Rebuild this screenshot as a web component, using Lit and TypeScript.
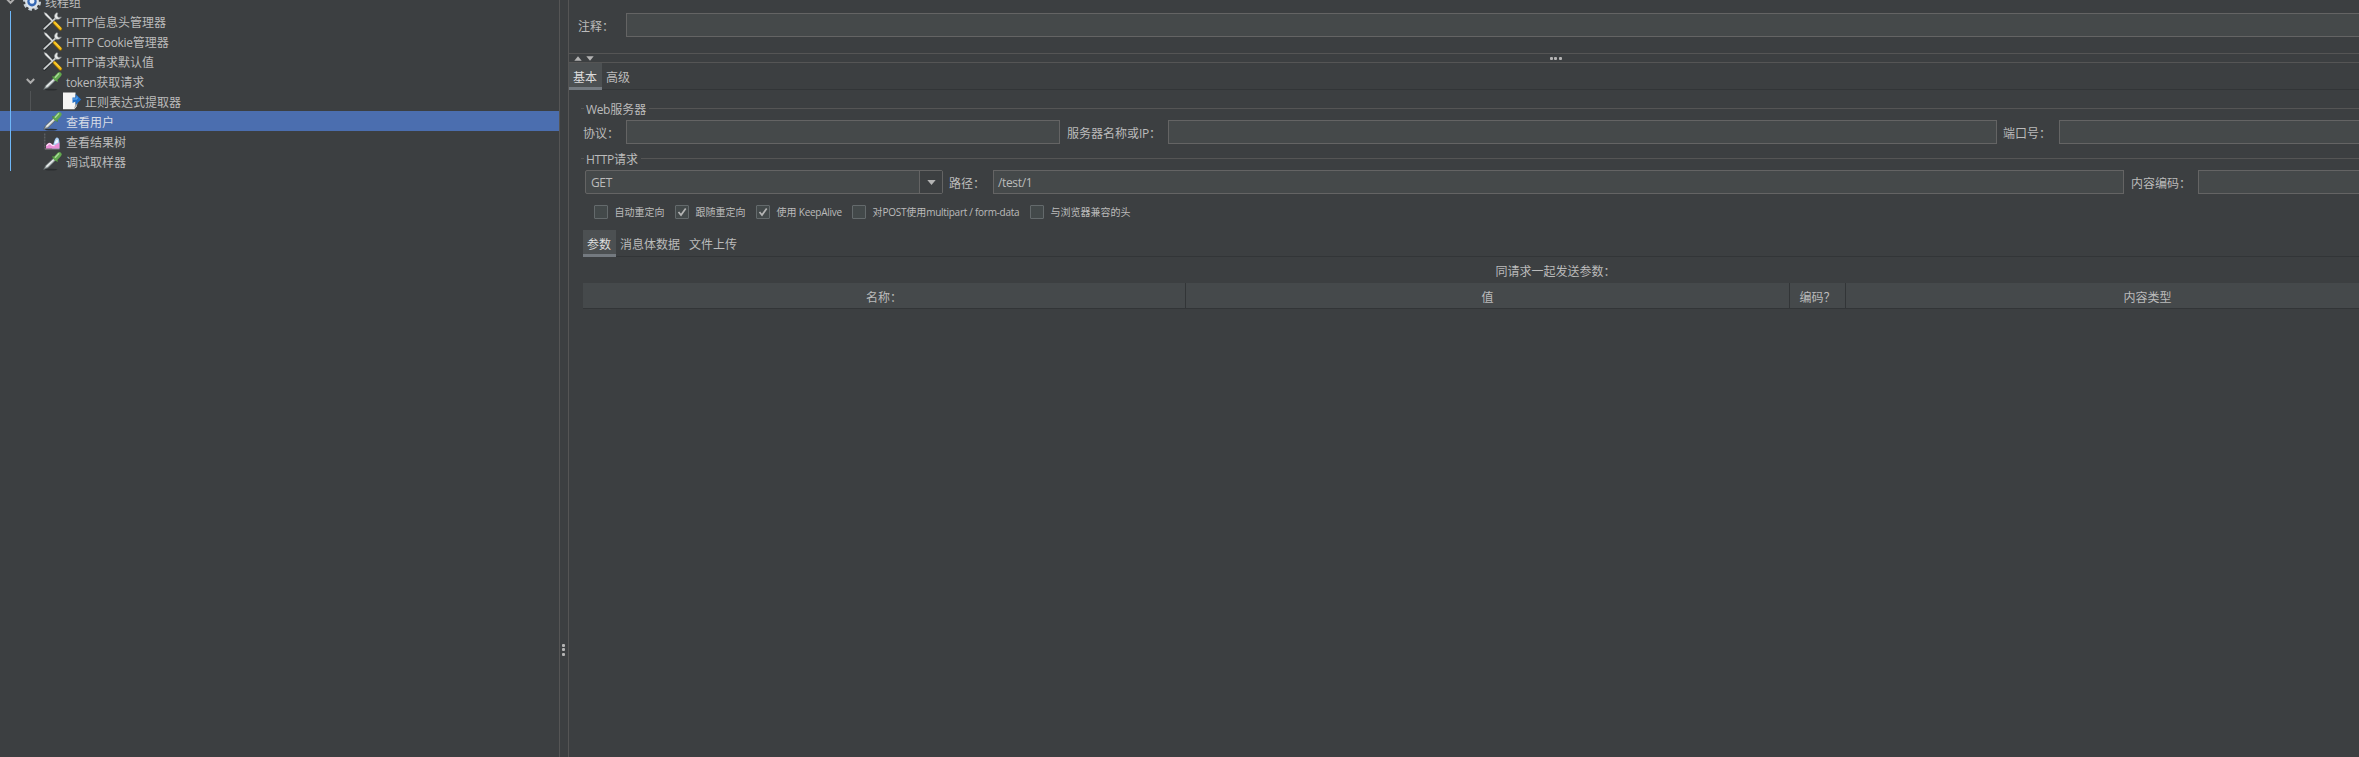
import { LitElement, html, svg, css } from "lit";
import { customElement } from "lit/decorators.js";
import { classMap } from "lit/directives/class-map.js";

type IconName = "tools" | "dropper" | "extract" | "chart" | "gear";

interface TreeItem {
  label: string;
  icon: IconName;
  depth: number;
  open?: boolean;
  selected?: boolean;
}

const TREE: TreeItem[] = [
  { label: "线程组", icon: "gear", depth: 0, open: true },
  { label: "HTTP信息头管理器", icon: "tools", depth: 1 },
  { label: "HTTP Cookie管理器", icon: "tools", depth: 1 },
  { label: "HTTP请求默认值", icon: "tools", depth: 1 },
  { label: "token获取请求", icon: "dropper", depth: 1, open: true },
  { label: "正则表达式提取器", icon: "extract", depth: 2 },
  { label: "查看用户", icon: "dropper", depth: 1, selected: true },
  { label: "查看结果树", icon: "chart", depth: 1 },
  { label: "调试取样器", icon: "dropper", depth: 1 },
];

const OPTIONS = [
  { label: "自动重定向", on: false, cls: "o1" },
  { label: "跟随重定向", on: true, cls: "o2" },
  { label: "使用 KeepAlive", on: true, cls: "o3" },
  { label: "对POST使用multipart / form-data", on: false, cls: "o4" },
  { label: "与浏览器兼容的头", on: false, cls: "o5" },
];

// Latin runs are set slightly tighter than the CJK text around them.
const mixed = (s: string) =>
  s
    .split(/([\x20-\x7e]+)/)
    .filter((p) => p)
    .map((p) => (/^[\x20-\x7e]/.test(p) ? html`<span class="latin">${p}</span>` : p));

const ICONS = {
  tools: svg`
    <path d="M.4 17 L10.5 7" stroke="#26292b" stroke-width="3.4" stroke-linecap="round"/>
    <path d="M.2 16.8 L11.8 6" stroke="#c9cdce" stroke-width="1.8" stroke-linecap="round"/>
    <path d="M12.6 .8 C10.2 2 9.8 4.8 11.2 6.4 C12.8 8 16 7.6 17.4 5 L14.8 5.4 L13.2 4 L13.8 1 Z" fill="#e4e6e6" stroke="#84898b" stroke-width=".6"/>
    <path d="M0 .4 L2.4 1.2 L10 9.6 L9 10.4 L1.2 3 Z" fill="#eceeee" stroke="#8f9395" stroke-width=".5"/>
    <path d="M10.4 10.8 L16.4 17" stroke="#7a5c10" stroke-width="3.6" stroke-linecap="round"/>
    <path d="M10.6 10.6 L16.4 16.6" stroke="#f5bd17" stroke-width="2.5" stroke-linecap="round"/>
    <path d="M11 10.4 L16 15.4" stroke="#ffe26a" stroke-width=".7"/>`,
  dropper: svg`
    <ellipse cx="7" cy="17.6" rx="6.5" ry=".8" fill="#2b2e30"/>
    <path d="M-.4 17.4 L1.4 13.8 L9.4 6.2 L11.6 8.4 L4 15.8 Z" fill="#a9b1b1" stroke="#565d5f" stroke-width=".7"/>
    <path d="M2.4 14.8 L10 7.4" stroke="#eef2f2" stroke-width="1.2"/>
    <path d="M9 4.8 L13.2 9" stroke="#4c8b3a" stroke-width="1.7" stroke-linecap="round"/>
    <path d="M11.6 6.4 L15.4 2.4" stroke="#62a84f" stroke-width="4.6" stroke-linecap="round"/>
    <path d="M11.4 5.2 L14.6 1.8" stroke="#a9da98" stroke-width="1.5" stroke-linecap="round"/>`,
  extract: svg`
    <path d="M0 .5 H12.5 V11.5 L14 14 L11.5 17.2 H0 Z" fill="#f5f5f4"/>
    <path d="M12.5 11.5 L15 11.6 L11 17.2 Z" fill="#9fa2a3"/>
    <path d="M9.5 5.4 H12.6 V2 L18.2 7.4 L12.6 13 V9.6 L9.5 11 Z" fill="#1f6fc9"/>
    <path d="M10 7 H14 V4.5" fill="none" stroke="#6fb3f2" stroke-width="1"/>`,
  chart: svg`
    <path d="M.8 1.5 V17" stroke="#696d6f" stroke-width="1" stroke-dasharray="2 1"/>
    <path d="M.8 17 H15.5" stroke="#85898a" stroke-width="1"/>
    <path d="M8 16.5 C9.5 14 10 7 12.6 5.6 C14.6 5 15.4 8 15.4 10 V16.5 Z" fill="#a8cdf2"/>
    <path d="M10.6 12 C11 9.5 12 7.5 13.2 7.5 C14 7.5 14.2 9 14 10.5 Z" fill="#eef6ff"/>
    <path d="M2 16.5 V13.5 C3.5 11.5 5 10.5 6.2 11 C7.6 11.5 8.2 13.2 9.6 13.2 C11.6 13.2 13.6 11.4 15.4 10.4 V16.5 Z" fill="#ea8fd6"/>
    <path d="M2.6 14 C4 12.2 5.6 11.2 6.6 12 C8 13.4 9.2 14 10.6 13.6" stroke="#fde3f7" stroke-width="1.2" fill="none"/>`,
  gear: svg`
    <circle cx="9" cy="9.8" r="7.6" fill="none" stroke="#c9d2da" stroke-width="2.8" stroke-dasharray="3.4 2.57"/>
    <circle cx="9" cy="9.8" r="6.9" fill="#dde3e8"/>
    <circle cx="9" cy="9.8" r="4.7" fill="#3568b4"/>
    <circle cx="9" cy="9.4" r="2.4" fill="#e8f0fa"/>`,
};

@customElement("app-root")
export class AppRoot extends LitElement {
  static styles = css`
    :host {
      display: grid;
      grid-template-columns: 559px 10px 1973px;
      width: 100%;
      height: 757px;
      overflow: hidden;
      background: #3c3f41;
      color: #bbbbbb;
      font: 12px/16px "Open Sans", "Noto Sans CJK SC", sans-serif;
      white-space: nowrap;
    }
    * { box-sizing: border-box; }
    svg { display: block; flex: none; overflow: visible; }
    .latin { letter-spacing: -0.35px; white-space: pre; }

    .tree { overflow: hidden; }
    .rows { margin-top: -9px; }
    .row { display: flex; height: 20px; align-items: center; }
    .row.selected { background: #4b6eaf; color: #d8dde6; }
    .rail { flex: none; align-self: stretch; width: 1px; margin-left: 10px; background: #6fb7f7; }
    .norail { flex: none; width: 1px; margin-left: 5px; }
    .twist { flex: none; width: 33px; display: flex; align-items: center; padding-left: 15px; align-self: stretch; }
    .twist0 { flex: none; width: 17px; display: flex; align-items: center; }
    .indent { flex: none; align-self: stretch; width: 33px; margin-left: 19px; border-left: 1px solid #515456; }
    .name { padding-left: 4px; padding-top: 4px; }

    .vsplit {
      border: solid #555555;
      border-width: 0 1px;
      display: flex;
      flex-direction: column;
      align-items: center;
      gap: 1.5px;
      padding-top: 643.5px;
      padding-right: 1px;
    }
    .dot { flex: none; width: 3px; height: 3px; border-radius: 1px; background: #b4b4b4; }

    .comment { display: flex; height: 53px; padding: 13px 0 16px 9px; }
    .comment .lab { width: 48px; }
    .lab { flex: none; line-height: 27px; }
    .box {
      flex: none;
      height: 24px;
      border: 1px solid #646464;
      background: #45494a;
      padding-left: 4px;
      line-height: 24px;
    }
    .grow { flex: 1; }
    .hsplit {
      display: grid;
      grid-template-columns: 1fr auto 1fr;
      align-items: center;
      height: 10px;
      border: solid #555555;
      border-width: 1px 0;
    }
    .arrows { display: flex; gap: 4px; padding-left: 5px; }
    .hdots { display: flex; gap: 1.5px; }

    .tabs { display: flex; height: 27px; box-shadow: inset 0 -1px #323537; }
    .tab { padding: 7px 4px 0 4px; height: 27px; }
    .tab.active { width: 33px; background: #4c5052; border-bottom: 3px solid #747a80; color: #dddddd; }
    .inner { padding: 0 14px; }
    .legend { display: flex; align-items: center; margin-left: -2px; }
    .legend::before { content: ""; width: 3px; height: 1px; background: #555555; margin-right: 2px; }
    .legend::after { content: ""; flex: 1; height: 1px; background: #555555; margin-left: 3px; }
    .legend > span { padding-top: 2px; margin-bottom: -1px; }
    .web { margin-top: 10px; height: 17px; }
    .http { margin-top: 6px; height: 17px; }
    .fields { display: flex; height: 24px; }
    .f-web { margin-top: 3px; }
    .f-http { margin-top: 3px; padding-left: 2px; }
    .l-proto { width: 43px; }
    .w-proto { width: 434px; }
    .l-server { width: 108px; padding-left: 7px; }
    .w-server { width: 829px; }
    .l-port { width: 62px; padding-left: 6px; }
    .combo {
      display: flex;
      flex: none;
      width: 358px;
      height: 24px;
      border: 1px solid #646464;
      border-radius: 2px;
      background: #45494a;
      line-height: 24px;
    }
    .value { flex: 1; padding-left: 5px; border-right: 1px solid #646464; }
    .arrow { width: 22px; display: flex; align-items: center; justify-content: center; background: #3c3f41; }
    .l-path { width: 50px; padding-left: 6px; }
    .w-path { width: 1131px; }
    .l-enc { width: 74px; padding-left: 7px; }

    .options { display: flex; align-items: center; height: 14px; margin: 11px 0 11px 11px; font-size: 10px; line-height: 14px; }
    .opt { display: flex; align-items: center; gap: 6.5px; }
    .opt .latin { letter-spacing: -0.28px; }
    .o1, .o2 { width: 81px; }
    .o3 { width: 96px; }
    .o4 { width: 178px; }
    .check { width: 14px; height: 14px; border: 1px solid #646a6c; border-radius: 1px; background: #43494a; }
    .tabs.sub .wide { padding-right: 5px; }
    .caption { height: 26px; line-height: 30px; text-align: center; }
    .head {
      display: grid;
      grid-template-columns: 603px 604px 56px 604px 1fr;
      height: 26px;
      background: #45494b;
      border-bottom: 1px solid #323537;
      line-height: 30px;
      text-align: center;
    }
    .cell { border-right: 1px solid #323537; height: 25px; }
  `;

  private icon(name: IconName) {
    return html`<svg width="18" height="18" viewBox="0 0 18 18">${ICONS[name]}</svg>`;
  }

  private chevron() {
    return html`<svg width="9" height="6" viewBox="0 0 9 6">
      <path d="M.8 1 L4.5 4.8 L8.2 1" fill="none" stroke="#adadad" stroke-width="2"/>
    </svg>`;
  }

  private row(it: TreeItem) {
    return html`<div class=${classMap({ row: true, selected: !!it.selected })}>
      ${it.depth === 0
        ? html`<span class="norail"></span><span class="twist0">${this.chevron()}</span>`
        : html`<span class="rail"></span>`}
      ${it.depth === 1 ? html`<span class="twist">${it.open ? this.chevron() : ""}</span>` : ""}
      ${it.depth === 2 ? html`<span class="indent"></span>` : ""}
      ${this.icon(it.icon)}
      <span class="name">${mixed(it.label)}</span>
    </div>`;
  }

  private dots() {
    return [0, 1, 2].map(() => html`<i class="dot"></i>`);
  }

  render() {
    return html`
      <div class="tree"><div class="rows">${TREE.map((it) => this.row(it))}</div></div>
      <div class="vsplit">${this.dots()}</div>
      <div class="main">
        <div class="comment"><span class="lab">注释：</span><div class="box grow"></div></div>
        <div class="hsplit">
          <div class="arrows">
            <svg width="8" height="5" viewBox="0 0 8 5"><path d="M.3 4.7 L4 .3 L7.7 4.7Z" fill="#b4b4b4"/></svg>
            <svg width="8" height="5" viewBox="0 0 8 5"><path d="M.3 .3 L4 4.7 L7.7 .3Z" fill="#b4b4b4"/></svg>
          </div>
          <div class="hdots">${this.dots()}</div>
        </div>
        <div class="tabs"><div class="tab active">基本</div><div class="tab">高级</div></div>
        <div class="inner">
          <div class="legend web"><span>${mixed("Web服务器")}</span></div>
          <div class="fields f-web">
            <span class="lab l-proto">协议：</span><div class="box w-proto"></div>
            <span class="lab l-server">${mixed("服务器名称或IP：")}</span><div class="box w-server"></div>
            <span class="lab l-port">端口号：</span><div class="box grow"></div>
          </div>
          <div class="legend http"><span>${mixed("HTTP请求")}</span></div>
          <div class="fields f-http">
            <div class="combo">
              <div class="value">${mixed("GET")}</div>
              <div class="arrow"><svg width="9" height="5" viewBox="0 0 9 5"><path d="M.3 0 H8.7 L4.5 5Z" fill="#b4b4b4"/></svg></div>
            </div>
            <span class="lab l-path">路径：</span><div class="box w-path">${mixed("/test/1")}</div>
            <span class="lab l-enc">内容编码：</span><div class="box grow"></div>
          </div>
          <div class="options">
            ${OPTIONS.map(
              (o) => html`<div class="opt ${o.cls}">
                <span class="check">${o.on
                  ? html`<svg width="12" height="12" viewBox="0 0 12 12"><path d="M2.5 6 L5 9 L9.7 2.5" fill="none" stroke="#b4b4b4" stroke-width="1.7"/></svg>`
                  : ""}</span><span>${mixed(o.label)}</span>
              </div>`
            )}
          </div>
          <div class="tabs sub">
            <div class="tab active">参数</div><div class="tab wide">消息体数据</div><div class="tab">文件上传</div>
          </div>
          <div class="caption">同请求一起发送参数：</div>
          <div class="head">
            <div class="cell">名称：</div><div class="cell">值</div><div class="cell">编码？</div>
            <div class="cell">内容类型</div><div class="cell"></div>
          </div>
        </div>
      </div>
    `;
  }
}
